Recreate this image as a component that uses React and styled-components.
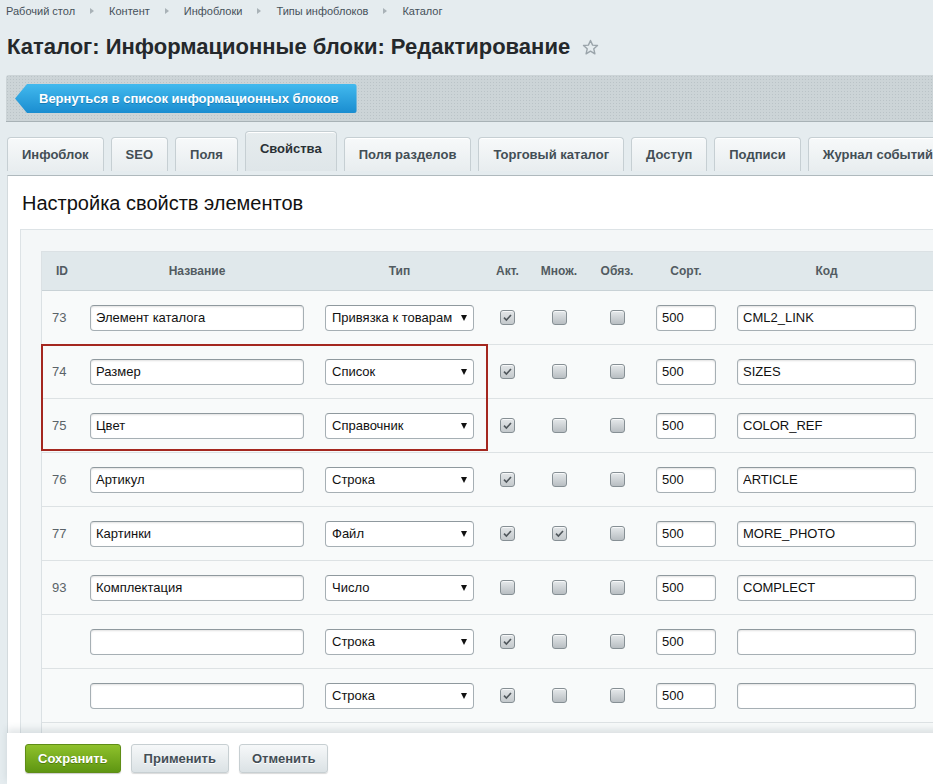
import React from "react";
import styled, { createGlobalStyle, css } from "styled-components";

const GlobalStyle = createGlobalStyle`
  html, body {
    margin: 0;
    padding: 0;
    overflow: hidden;
    background: #e5ecef;
    font-family: "Liberation Sans", Arial, sans-serif;
  }
`;

const crumbs = ["Рабочий стол", "Контент", "Инфоблоки", "Типы инфоблоков", "Каталог"];
const tabs = [
  "Инфоблок",
  "SEO",
  "Поля",
  "Свойства",
  "Поля разделов",
  "Торговый каталог",
  "Доступ",
  "Подписи",
  "Журнал событий",
];

// column layout of the property grid, x offsets from the table's left edge
const columns = [
  { key: "id", label: "ID", width: 48 },
  { key: "name", label: "Название", width: 235, box: 214 },
  { key: "type", label: "Тип", width: 159, box: 149 },
  { key: "act", label: "Акт.", width: 47, center: true },
  { key: "mult", label: "Множ.", width: 56, center: true },
  { key: "req", label: "Обяз.", width: 60, center: true },
  { key: "sort", label: "Сорт.", width: 80, box: 60, pad: 9 },
  { key: "code", label: "Код", width: 260, box: 179, pad: 10 },
];

const rows = [
  { id: "73", name: "Элемент каталога", type: "Привязка к товарам", act: true, code: "CML2_LINK" },
  { id: "74", name: "Размер", type: "Список", act: true, code: "SIZES" },
  { id: "75", name: "Цвет", type: "Справочник", act: true, code: "COLOR_REF" },
  { id: "76", name: "Артикул", type: "Строка", act: true, code: "ARTICLE" },
  { id: "77", name: "Картинки", type: "Файл", act: true, mult: true, code: "MORE_PHOTO" },
  { id: "93", name: "Комплектация", type: "Число", act: false, code: "COMPLECT" },
  { id: "", name: "", type: "Строка", act: true, code: "" },
  { id: "", name: "", type: "Строка", act: true, code: "" },
];

const gridTemplate = columns.map((c) => `${c.width}px`).join(" ");

const Page = styled.div`
  width: 1000px;
  height: 100vh;
  padding-left: 7px;
  display: flex;
  flex-direction: column;
  box-sizing: border-box;
`;

const Crumbs = styled.div`
  display: flex;
  align-items: center;
  gap: 12px;
  padding-top: 4px;
  margin-left: -1px;
  font-size: 11px;
  line-height: 14px;
  color: #46515a;
`;

const Crumb = styled.span`
  white-space: nowrap;
`;

const CrumbArrow = styled.span`
  width: 0;
  height: 0;
  margin: 0 3px;
  border-top: 3px solid transparent;
  border-bottom: 3px solid transparent;
  border-left: 4px solid #a9b2b7;
`;

const TitleRow = styled.div`
  display: flex;
  align-items: center;
  gap: 12px;
  margin-top: 16px;
`;

const Title = styled.h1`
  margin: 0;
  font-size: 22px;
  line-height: 26px;
  font-weight: bold;
  color: #24282b;
`;

const Toolbar = styled.div`
  margin-top: 15px;
  margin-left: -1px;
  height: 47px;
  padding: 9px 0 0 9px;
  box-sizing: border-box;
  border-bottom: 1px solid #a8b2b6;
  border-radius: 3px 0 0 0;
  background-color: #ccd4d7;
  background-image: radial-gradient(#bac3c7 0.8px, transparent 0.9px);
  background-size: 3px 3px;
`;

const BackButton = styled.button`
  height: 29px;
  padding: 0 18px 0 24px;
  border: none;
  border-radius: 0 3px 3px 0;
  background: linear-gradient(#42b9ee, #1a8dd0);
  clip-path: polygon(12px 0, 100% 0, 100% 100%, 12px 100%, 0 50%);
  color: #fff;
  font-family: inherit;
  font-size: 13px;
  font-weight: bold;
  text-shadow: 0 1px 0 rgba(0, 60, 110, 0.35);
  cursor: pointer;
`;

const TabBar = styled.div`
  display: flex;
  align-items: flex-end;
  gap: 7px;
  height: 40px;
  margin-top: 9px;
  margin-bottom: 4px;
`;

const Tab = styled.div`
  display: flex;
  align-items: center;
  height: 34px;
  padding: 0 14px;
  box-sizing: border-box;
  border: 1px solid #c6cfd3;
  border-bottom: none;
  border-radius: 4px 4px 0 0;
  background: linear-gradient(#f7f9fa, #e8edef);
  box-shadow: inset 0 1px 0 #fff;
  font-size: 13px;
  font-weight: bold;
  color: #434e55;
  white-space: nowrap;
  ${(p) =>
    p.$active &&
    css`
      height: 40px;
      padding-bottom: 6px;
      background: linear-gradient(#e6ecee, #dfe6e9);
      color: #2a3135;
    `}
`;

const Panel = styled.div`
  flex: 1;
  min-height: 0;
  display: flex;
  flex-direction: column;
  background: #fff;
  border-top: 1px solid #afb9bd;
  border-left: 1px solid #d3dadd;
  overflow: hidden;
`;

const Heading = styled.h2`
  margin: 0;
  padding: 15px 0 0 14px;
  font-size: 20px;
  line-height: 24px;
  font-weight: normal;
  color: #111;
`;

const InnerBox = styled.div`
  flex: 1;
  min-height: 0;
  margin: 14px 0 0 12px;
  padding: 21px 0 0 20px;
  background: #f4f7f8;
  border: 1px solid #dde3e6;
  border-bottom: none;
  overflow: hidden;
`;

const Table = styled.div`
  position: relative;
  min-height: 100%;
  border-left: 1px solid #dbe1e4;
  border-top: 1px solid #dbe1e4;
  background: #f8fafa;
`;

const Row = styled.div`
  display: grid;
  grid-template-columns: ${gridTemplate};
  align-items: center;
  height: ${(p) => (p.$head ? "38px" : "53px")};
  border-bottom: 1px solid ${(p) => (p.$head ? "#c9d2d6" : "#dde2e4")};
  background: ${(p) => (p.$head ? "#e0e8eb" : "transparent")};
`;

const Cell = styled.div`
  display: flex;
  align-items: center;
  justify-content: ${(p) => (p.$center ? "center" : "flex-start")};
  padding-left: ${(p) => p.$pad || 0}px;
`;

const HeadLabel = styled.span`
  display: block;
  width: ${(p) => (p.$w ? `${p.$w}px` : "auto")};
  text-align: center;
  font-size: 12px;
  font-weight: bold;
  color: #525b61;
`;

const IdText = styled.span`
  font-size: 13px;
  color: #5a6368;
`;

const fieldLook = css`
  height: 26px;
  box-sizing: border-box;
  border: 1px solid #a6afb4;
  border-top-color: #8f999e;
  border-radius: 4px;
  background: #fff;
  box-shadow: inset 0 1px 2px rgba(0, 0, 0, 0.12);
  font-family: "Liberation Sans", Arial, sans-serif;
  font-size: 13px;
  color: #111;
`;

const TextInput = styled.input`
  ${fieldLook};
  width: ${(p) => p.$w}px;
  padding: 0 5px;
  outline: none;
`;

const Select = styled.div`
  ${fieldLook};
  width: ${(p) => p.$w}px;
  display: flex;
  align-items: center;
  padding: 0 6px 0 6px;
  box-shadow: none;
`;

const SelectText = styled.span`
  flex: 1;
  overflow: hidden;
  white-space: nowrap;
`;

const SelectArrow = styled.span`
  width: 0;
  height: 0;
  margin-left: 4px;
  border-left: 3.5px solid transparent;
  border-right: 3.5px solid transparent;
  border-top: 6px solid #111;
`;

const Check = styled.span`
  width: 15px;
  height: 15px;
  box-sizing: border-box;
  display: flex;
  align-items: center;
  justify-content: center;
  border: 1px solid #868f94;
  border-radius: 3px;
  background: ${(p) =>
    p.$on
      ? "linear-gradient(#e3e6e8, #c4c9cc)"
      : "linear-gradient(#e6e9eb, #b8bec2)"};
  box-shadow: inset 0 1px 0 rgba(255, 255, 255, 0.7);
`;

const Highlight = styled.div`
  position: absolute;
  left: -1px;
  top: 92px;
  width: 447px;
  height: 107px;
  box-sizing: border-box;
  border: 2px solid #a4271f;
  pointer-events: none;
`;

const ButtonBar = styled.div`
  position: relative;
  z-index: 1;
  display: flex;
  gap: 10px;
  height: 51px;
  padding: 11px 0 0 18px;
  box-sizing: border-box;
  background: #fff;
  box-shadow: 0 -4px 7px rgba(90, 110, 120, 0.18);
`;

const ActionButton = styled.button`
  height: 29px;
  padding: 0 12px;
  border-radius: 3px;
  font-family: inherit;
  font-size: 13px;
  font-weight: bold;
  white-space: nowrap;
  cursor: pointer;
  ${(p) =>
    p.$primary
      ? css`
          border: 1px solid #5f8d16;
          background: linear-gradient(#8fc12c, #5e9612);
          color: #fff;
          text-shadow: 0 1px 0 rgba(40, 70, 0, 0.45);
          box-shadow: 0 1px 1px rgba(0, 0, 0, 0.2);
        `
      : css`
          border: 1px solid #c7cfd2;
          background: linear-gradient(#f6f8f9, #dbe2e5);
          color: #434e55;
          text-shadow: 0 1px 0 #fff;
          box-shadow: 0 1px 1px rgba(0, 0, 0, 0.15);
        `}
`;

const Star = () => (
  <svg width="17" height="17" viewBox="0 0 17 17">
    <polygon
      points="8.5,1.5 10.6,6.1 15.5,6.5 11.8,9.8 12.9,14.8 8.5,12.2 4.1,14.8 5.2,9.8 1.5,6.5 6.4,6.1"
      fill="none"
      stroke="#9aa4aa"
      strokeWidth="1.4"
      strokeLinejoin="round"
    />
  </svg>
);

const CheckBox = ({ on }) => (
  <Check $on={on}>
    {on && (
      <svg width="11" height="11" viewBox="0 0 11 11">
        <path d="M2 5.6 L4.4 8 L9 3" fill="none" stroke="#50575c" strokeWidth="1.6" />
      </svg>
    )}
  </Check>
);

const PropertyRow = ({ row }) => (
  <Row>
    <Cell $pad={10}>
      <IdText>{row.id}</IdText>
    </Cell>
    <Cell>
      <TextInput $w={214} defaultValue={row.name} />
    </Cell>
    <Cell>
      <Select $w={149}>
        <SelectText>{row.type}</SelectText>
        <SelectArrow />
      </Select>
    </Cell>
    <Cell $center>
      <CheckBox on={row.act} />
    </Cell>
    <Cell $center>
      <CheckBox on={!!row.mult} />
    </Cell>
    <Cell $center>
      <CheckBox on={!!row.req} />
    </Cell>
    <Cell $pad={9}>
      <TextInput $w={60} defaultValue="500" />
    </Cell>
    <Cell $pad={10}>
      <TextInput $w={179} defaultValue={row.code} />
    </Cell>
  </Row>
);

export default function App() {
  return (
    <>
      <GlobalStyle />
      <Page>
        <Crumbs>
          {crumbs.map((c, i) => (
            <React.Fragment key={c}>
              {i > 0 && <CrumbArrow />}
              <Crumb>{c}</Crumb>
            </React.Fragment>
          ))}
        </Crumbs>

        <TitleRow>
          <Title>Каталог: Информационные блоки: Редактирование</Title>
          <Star />
        </TitleRow>

        <Toolbar>
          <BackButton>Вернуться в список информационных блоков</BackButton>
        </Toolbar>

        <TabBar>
          {tabs.map((t) => (
            <Tab key={t} $active={t === "Свойства"}>
              {t}
            </Tab>
          ))}
        </TabBar>

        <Panel>
          <Heading>Настройка свойств элементов</Heading>
          <InnerBox>
            <Table>
              <Row $head>
                {columns.map((c) => (
                  <Cell
                    key={c.key}
                    $center={c.center}
                    $pad={c.key === "id" ? 14 : c.pad}
                  >
                    <HeadLabel $w={c.box}>{c.label}</HeadLabel>
                  </Cell>
                ))}
              </Row>
              {rows.map((r, i) => (
                <PropertyRow key={i} row={r} />
              ))}
              <Highlight />
            </Table>
          </InnerBox>
        </Panel>

        <ButtonBar>
          <ActionButton $primary>Сохранить</ActionButton>
          <ActionButton>Применить</ActionButton>
          <ActionButton>Отменить</ActionButton>
        </ButtonBar>
      </Page>
    </>
  );
}
